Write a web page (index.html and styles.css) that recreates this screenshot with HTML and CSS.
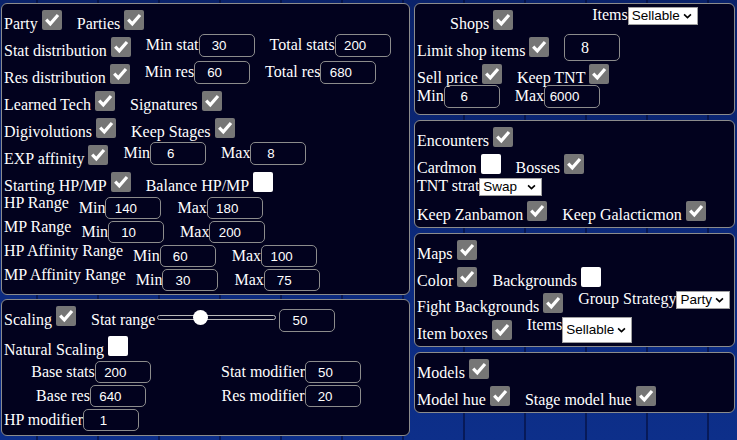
FILE: index.html
```html
<!DOCTYPE html>
<html lang="en">
<head>
<meta charset="utf-8">
<title>Randomizer settings</title>
<link rel="stylesheet" href="styles.css">
</head>
<body>
<div class="page">
  <div class="col col-left">
    <section class="panel panel-stats">
      <div class="row">
        <label class="item"><span>Party</span><input class="cb" type="checkbox" checked></label>
        <label class="item"><span>Parties</span><input class="cb" type="checkbox" checked></label>
      </div>
      <div class="row">
        <label class="item"><span>Stat distribution</span><input class="cb" type="checkbox" checked></label>
        <label class="field"><span>Min stat</span><input class="num" type="number" value="30"></label>
        <label class="field"><span>Total stats</span><input class="num" type="number" value="200"></label>
      </div>
      <div class="row">
        <label class="item"><span>Res distribution</span><input class="cb" type="checkbox" checked></label>
        <label class="field"><span>Min res</span><input class="num" type="number" value="60"></label>
        <label class="field"><span>Total res</span><input class="num" type="number" value="680"></label>
      </div>
      <div class="row">
        <label class="item"><span>Learned Tech</span><input class="cb" type="checkbox" checked></label>
        <label class="item"><span>Signatures</span><input class="cb" type="checkbox" checked></label>
      </div>
      <div class="row">
        <label class="item"><span>Digivolutions</span><input class="cb" type="checkbox" checked></label>
        <label class="item"><span>Keep Stages</span><input class="cb" type="checkbox" checked></label>
      </div>
      <div class="row">
        <label class="item"><span>EXP affinity</span><input class="cb" type="checkbox" checked></label>
        <label class="field"><span>Min</span><input class="num" type="number" value="6"></label>
        <label class="field"><span>Max</span><input class="num" type="number" value="8"></label>
      </div>
      <div class="row">
        <label class="item"><span>Starting HP/MP</span><input class="cb" type="checkbox" checked></label>
        <label class="item"><span>Balance HP/MP</span><input class="cb" type="checkbox"></label>
      </div>
      <div class="ranges">
        <div class="rrow">
          <span class="rlabel">HP Range</span>
          <label class="field"><span>Min</span><input class="num" type="number" value="140"></label>
          <label class="field"><span>Max</span><input class="num" type="number" value="180"></label>
        </div>
        <div class="rrow">
          <span class="rlabel">MP Range</span>
          <label class="field"><span>Min</span><input class="num" type="number" value="10"></label>
          <label class="field"><span>Max</span><input class="num" type="number" value="200"></label>
        </div>
        <div class="rrow">
          <span class="rlabel">HP Affinity Range</span>
          <label class="field"><span>Min</span><input class="num" type="number" value="60"></label>
          <label class="field"><span>Max</span><input class="num" type="number" value="100"></label>
        </div>
        <div class="rrow">
          <span class="rlabel">MP Affinity Range</span>
          <label class="field"><span>Min</span><input class="num" type="number" value="30"></label>
          <label class="field"><span>Max</span><input class="num" type="number" value="75"></label>
        </div>
      </div>
    </section>

    <section class="panel panel-scaling">
      <div class="row row-tall">
        <label class="item"><span>Scaling</span><input class="cb" type="checkbox" checked></label>
        <label class="slider-field"><span>Stat range</span><input class="slider" type="range" min="0" max="146" value="50"><input class="num" type="number" value="50"></label>
      </div>
      <div class="row">
        <label class="item"><span>Natural Scaling</span><input class="cb" type="checkbox"></label>
      </div>
      <div class="mods">
        <label class="field"><span>Base stats</span><input class="num" type="number" value="200"></label>
        <label class="field"><span>Stat modifier</span><input class="num" type="number" value="50"></label>
        <label class="field"><span>Base res</span><input class="num" type="number" value="640"></label>
        <label class="field"><span>Res modifier</span><input class="num" type="number" value="20"></label>
      </div>
      <div class="mrow">
        <label class="field"><span>HP modifier</span><input class="num" type="number" value="1"></label>
      </div>
    </section>
  </div>

  <div class="col col-right">
    <section class="panel panel-shops">
      <div class="row row-shops">
        <label class="item"><span>Shops</span><input class="cb" type="checkbox" checked></label>
        <label class="sel-field"><span>Items</span><select class="sel sel-items"><option>Sellable</option></select></label>
      </div>
      <div class="row">
        <label class="item"><span>Limit shop items</span><input class="cb" type="checkbox" checked></label>
        <input class="num num-big" type="number" value="8">
      </div>
      <div class="row">
        <label class="item"><span>Sell price</span><input class="cb" type="checkbox" checked></label>
        <label class="item"><span>Keep TNT</span><input class="cb" type="checkbox" checked></label>
      </div>
      <div class="row row-short">
        <label class="field"><span>Min</span><input class="num" type="number" value="6"></label>
        <label class="field"><span>Max</span><input class="num" type="number" value="6000"></label>
      </div>
    </section>

    <section class="panel panel-encounters">
      <div class="row">
        <label class="item"><span>Encounters</span><input class="cb" type="checkbox" checked></label>
      </div>
      <div class="row">
        <label class="item"><span>Cardmon</span><input class="cb" type="checkbox"></label>
        <label class="item"><span>Bosses</span><input class="cb" type="checkbox" checked></label>
      </div>
      <div class="row row-select">
        <label class="sel-field"><span>TNT strat</span><select class="sel sel-tnt"><option>Swap</option></select></label>
      </div>
      <div class="row">
        <label class="item"><span>Keep Zanbamon</span><input class="cb" type="checkbox" checked></label>
        <label class="item"><span>Keep Galacticmon</span><input class="cb" type="checkbox" checked></label>
      </div>
    </section>

    <section class="panel panel-maps">
      <div class="row">
        <label class="item"><span>Maps</span><input class="cb" type="checkbox" checked></label>
      </div>
      <div class="row">
        <label class="item"><span>Color</span><input class="cb" type="checkbox" checked></label>
        <label class="item"><span>Backgrounds</span><input class="cb" type="checkbox"></label>
      </div>
      <div class="row row-26">
        <label class="item"><span>Fight Backgrounds</span><input class="cb" type="checkbox" checked></label>
        <label class="sel-field"><span>Group Strategy</span><select class="sel sel-group"><option>Party</option></select></label>
      </div>
      <div class="row">
        <label class="item"><span>Item boxes</span><input class="cb" type="checkbox" checked></label>
        <label class="sel-field"><span>Items</span><select class="sel sel-items sel-tall"><option>Sellable</option></select></label>
      </div>
    </section>

    <section class="panel panel-models">
      <div class="row">
        <label class="item"><span>Models</span><input class="cb" type="checkbox" checked></label>
      </div>
      <div class="row">
        <label class="item"><span>Model hue</span><input class="cb" type="checkbox" checked></label>
        <label class="item"><span>Stage model hue</span><input class="cb" type="checkbox" checked></label>
      </div>
    </section>
  </div>
</div>
</body>
</html>
```
FILE: styles.css
```css
html, body {
  margin: 0;
  height: 100%;
}
body {
  font-family: "Liberation Serif", "Times New Roman", serif;
  font-size: 16px;
  color: #fff;
  background-color: #0b2878;
  background-image:
    repeating-linear-gradient(90deg, rgba(0,0,30,0) 0 36px, rgba(0,0,30,.45) 36px 38px, rgba(0,0,30,0) 38px 61px),
    linear-gradient(180deg, #0a226a, #0d2f8a);
  overflow: hidden;
}
.page {
  display: flex;
  gap: 4px;
  padding: 3px 0 0 1px;
}
.col {
  display: flex;
  flex-direction: column;
  gap: 4px;
}
.col-left { width: 409px; }
.col-right { width: 321px; gap: 5px; }

.panel {
  box-sizing: border-box;
  background: #02021e;
  border: 1px solid #8c8c8c;
  border-radius: 6px;
  padding: 3px 2px 2px;
}
.panel-stats { padding-bottom: 4px; }
.panel-scaling { padding-bottom: 3px; }

.row {
  display: flex;
  align-items: flex-end;
  height: 27px;
  gap: 15px;
}
.row-short { height: 24px; }
.row-select { height: 20px; align-items: flex-start; }
.row-26 { height: 26px; }
.row-tall { height: 30px; }

.item {
  display: flex;
  align-items: flex-end;
}
.item > span {
  line-height: 18px;
  margin-bottom: 1px;
  white-space: nowrap;
}
.cb {
  appearance: none;
  -webkit-appearance: none;
  box-sizing: border-box;
  width: 20px;
  height: 20px;
  margin: 0 0 4px 4px;
  border-radius: 2px;
  background: #fff;
  flex: none;
}
.cb:checked {
  background: #767676 url("data:image/svg+xml,%3Csvg xmlns='http://www.w3.org/2000/svg' viewBox='0 0 20 20'%3E%3Cpolyline points='4.2,9.6 8.3,13.8 16,5' fill='none' stroke='white' stroke-width='3.2'/%3E%3C/svg%3E") center / 20px 20px no-repeat;
}

.field {
  display: flex;
  align-items: baseline;
}
.field > span {
  line-height: 18px;
  white-space: nowrap;
}
.num {
  box-sizing: border-box;
  width: 56px;
  height: 23px;
  margin: 0 0 4px;
  padding: 1px 2px;
  border: 1px solid #8c8c8c;
  border-radius: 5px;
  background: transparent;
  color: #fff;
  font-family: "Liberation Sans", Arial, sans-serif;
  font-size: 13.333px;
  text-align: center;
  flex: none;
}
.num:focus { outline: none; }
.num-big {
  height: 27px;
  margin-bottom: 0;
  font-family: "Liberation Serif", "Times New Roman", serif;
  font-size: 16px;
}

/* HP / MP ranges */
.ranges { margin-top: -2px; }
.rrow {
  display: flex;
  align-items: flex-start;
  height: 24px;
}
.rlabel {
  line-height: 18px;
  margin-right: 10px;
  white-space: nowrap;
}
.rrow .field { margin-top: 3px; }
.rrow .field + .field { margin-left: 16px; }
.rrow .num { height: 22px; margin: 0; }

/* scaling panel */
.row-tall .item > span { margin-bottom: 4px; }
.row-tall .cb { margin-bottom: 7px; }
.slider-field {
  display: flex;
  align-items: flex-end;
}
.slider-field > span {
  line-height: 18px;
  margin-bottom: 4px;
}
.slider-field .num { margin: 0 0 1px; }
.slider {
  -webkit-appearance: none;
  appearance: none;
  width: 119px;
  height: 15px;
  margin: 0 3px 8px 2px;
  background: transparent;
}
.slider::-webkit-slider-runnable-track {
  box-sizing: border-box;
  height: 5px;
  border: 1px solid #b8b8b8;
  border-radius: 3px;
  background: #02021e;
}
.slider::-webkit-slider-thumb {
  -webkit-appearance: none;
  appearance: none;
  width: 15px;
  height: 15px;
  margin-top: -6px;
  border-radius: 50%;
  background: #fff;
  border: none;
}
.mods {
  display: grid;
  grid-template-columns: 174px 226px;
  grid-auto-rows: 24px;
}
.mods .field { justify-self: center; }
.mods .num, .mrow .num { height: 22px; margin: 1px 0 0; }
.mrow { height: 24px; display: flex; }

/* selects */
.sel-field {
  display: flex;
  align-items: flex-start;
  margin-top: -1px;
}
.sel-field > span {
  line-height: 18px;
  white-space: nowrap;
}
.row .sel-field { align-self: flex-start; }
.row-shops { padding-left: 33px; gap: 79px; }
.sel {
  -webkit-appearance: none;
  appearance: none;
  box-sizing: border-box;
  height: 18px;
  margin: 1px 0 0;
  font-family: "Liberation Sans", Arial, sans-serif;
  font-size: 13.5px;
  line-height: 16px;
  color: #000;
  background: #fff url("data:image/svg+xml,%3Csvg xmlns='http://www.w3.org/2000/svg' viewBox='0 0 10 7'%3E%3Cpolyline points='1,1.5 5,5.3 9,1.5' fill='none' stroke='black' stroke-width='1.9'/%3E%3C/svg%3E") no-repeat right 5px center / 9px 6px;
  border: 1px solid #a0a0a0;
  border-radius: 0;
  padding: 0 16px 0 3px;
}
.sel:focus { outline: none; }
.sel-items { width: 70px; }
.sel-tnt { width: 63px; }
.sel-group { width: 54px; }
.sel-tall { height: 26px; }
```
